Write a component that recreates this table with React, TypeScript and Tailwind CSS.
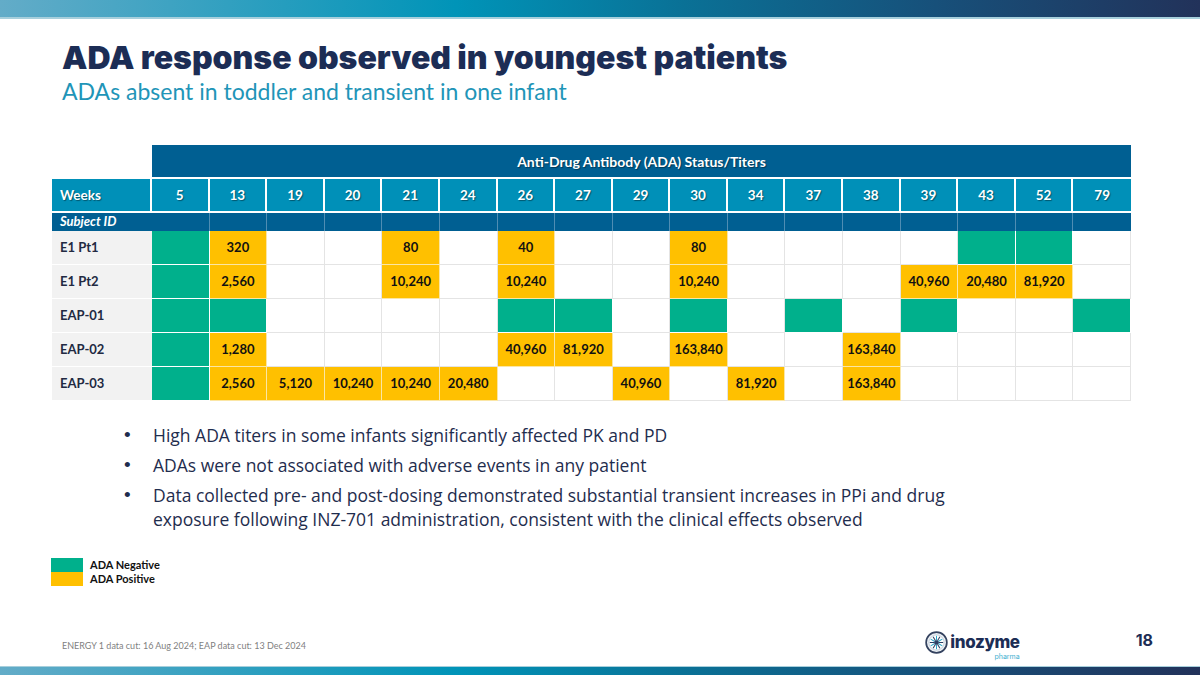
import React from 'react';

const weeks = [5, 13, 19, 20, 21, 24, 26, 27, 29, 30, 34, 37, 38, 39, 43, 52, 79];

// "g" = ADA negative (green), "" = no sample, anything else = positive titer
const subjects: { id: string; cells: string[] }[] = [
  { id: 'E1 Pt1', cells: ['g', '320', '', '', '80', '', '40', '', '', '80', '', '', '', '', 'g', 'g', ''] },
  { id: 'E1 Pt2', cells: ['g', '2,560', '', '', '10,240', '', '10,240', '', '', '10,240', '', '', '', '40,960', '20,480', '81,920', ''] },
  { id: 'EAP-01', cells: ['g', 'g', '', '', '', '', 'g', 'g', '', 'g', '', 'g', '', 'g', '', '', 'g'] },
  { id: 'EAP-02', cells: ['g', '1,280', '', '', '', '', '40,960', '81,920', '', '163,840', '', '', '163,840', '', '', '', ''] },
  { id: 'EAP-03', cells: ['g', '2,560', '5,120', '10,240', '10,240', '20,480', '', '', '40,960', '', '81,920', '', '163,840', '', '', '', ''] },
];

const bullets = [
  'High ADA titers in some infants significantly affected PK and PD',
  'ADAs were not associated with adverse events in any patient',
];

const Cell: React.FC<{ v: string }> = ({ v }) => {
  if (v === 'g') return <div className="h-[34px] bg-[#00b08c] border-r border-b border-white" />;
  if (v === '') return <div className="h-[34px] bg-white border-r border-b border-[#e4e4e4]" />;
  return (
    <div className="h-[34px] bg-[#ffc000] border-r border-b border-[#fbe6a4] flex items-center justify-center text-[13px] font-bold text-[#111]">
      {v}
    </div>
  );
};

const Logo: React.FC = () => (
  <div className="flex items-center gap-[2px]">
    <svg width="23" height="23" viewBox="0 0 24 24">
      <circle cx="12" cy="12" r="10.8" fill="#eef2f6" stroke="#34425f" strokeWidth="1.8" />
      <circle cx="12" cy="12" r="8" fill="#ffffff" stroke="#9fb3c6" strokeWidth="0.6" />
      {Array.from({ length: 12 }).map((_, i) => {
        const a = (i * Math.PI) / 6;
        return (
          <line
            key={i}
            x1={12 + Math.cos(a) * 2.2}
            y1={12 + Math.sin(a) * 2.2}
            x2={12 + Math.cos(a) * 7}
            y2={12 + Math.sin(a) * 7}
            stroke={i % 2 ? '#2aa6c8' : '#2c3e63'}
            strokeWidth="1.1"
          />
        );
      })}
      <circle cx="12" cy="12" r="2.4" fill="#2c3e63" />
    </svg>
    <div className="flex flex-col items-end mt-[7px]">
      <span className="font-['Inter',sans-serif] font-extrabold text-[17px] tracking-[-0.4px] text-[#1c2d55] leading-[21px]">inozyme</span>
      <span className="font-['Inter',sans-serif] text-[7px] text-[#3fb0d0] leading-[7px]">pharma</span>
    </div>
  </div>
);

const App: React.FC = () => (
  <div className="w-[1200px] h-[675px] bg-white flex flex-col overflow-hidden font-['Lato',sans-serif]">
    <div className="h-[17px] bg-[linear-gradient(90deg,#63acc8_0%,#0094b8_38%,#0a7196_57%,#17507a_78%,#22325a_100%)]" />
    <div className="h-[2px] bg-[#a7cfdc]" />

    <div className="pl-[62px] pt-[20px]">
      <h1 className="font-['Inter',sans-serif] font-black text-[32px] leading-[38px] text-[#1c2d55]">
        ADA response observed in youngest patients
      </h1>
      <p className="text-[23px] leading-[28px] text-[#1f95b8]">
        ADAs absent in toddler and transient in one infant
      </p>
    </div>

    <div className="pl-[52px] mt-[40px]">
      <div className="w-[1079px] grid grid-cols-[100px_repeat(17,minmax(0,1fr))]">
        <div className="h-[34px]" />
        <div className="col-span-17 h-[34px] bg-[#005f92] border-b-2 border-white flex items-center justify-center text-[14px] font-bold text-white [text-shadow:1px_1px_1px_rgba(0,0,0,0.4)]">
          Anti-Drug Antibody (ADA) Status/Titers
        </div>

        <div className="h-[34px] bg-[#0090b8] border-r-2 border-b-2 border-white flex items-center pl-[8px] text-[13.5px] font-bold text-white [text-shadow:1px_1px_1px_rgba(0,0,0,0.4)]">
          Weeks
        </div>
        {weeks.map((w, i) => (
          <div
            key={w}
            className={
              'h-[34px] bg-[#0090b8] border-b-2 border-white flex items-center justify-center text-[13.5px] font-bold text-white [text-shadow:1px_1px_1px_rgba(0,0,0,0.4)] ' +
              (i < weeks.length - 1 ? 'border-r-2' : '')
            }
          >
            {w}
          </div>
        ))}

        <div className="col-span-2 h-[18px] bg-[#005f92] border-r border-[#4f8db3] flex items-center pl-[8px] text-[13px] font-bold italic text-white">
          Subject ID
        </div>
        {weeks.slice(1).map((w, i) => (
          <div key={w} className={'h-[18px] bg-[#005f92] ' + (i < weeks.length - 2 ? 'border-r border-[#4f8db3]' : '')} />
        ))}

        {subjects.map((s) => (
          <React.Fragment key={s.id}>
            <div className="h-[34px] bg-[#f2f2f2] border-b border-white flex items-center pl-[8px] text-[13px] font-bold text-[#222a42]">
              {s.id}
            </div>
            {s.cells.map((v, i) => (
              <Cell key={i} v={v} />
            ))}
          </React.Fragment>
        ))}
      </div>
    </div>

    <ul className="mt-[22px] pl-[124px] flex flex-col gap-[6px] font-['Open_Sans',sans-serif] text-[17.5px] leading-[24px] text-[#1f2d4e]">
      {bullets.map((b) => (
        <li key={b} className="flex">
          <span className="w-[29px] shrink-0 font-['Liberation_Sans',sans-serif] text-[19px]">•</span>
          <span>{b}</span>
        </li>
      ))}
      <li className="flex">
        <span className="w-[29px] shrink-0 font-['Liberation_Sans',sans-serif] text-[19px]">•</span>
        <span className="whitespace-nowrap">
          Data collected pre- and post-dosing demonstrated substantial transient increases in PPi and drug
          <br />
          exposure following INZ-701 administration, consistent with the clinical effects observed
        </span>
      </li>
    </ul>

    <div className="mt-[27px] pl-[51px] flex flex-col">
      <div className="flex items-center h-[14px]">
        <div className="w-[32px] h-[14px] bg-[#00b08c]" />
        <span className="ml-[7px] text-[11px] font-bold text-[#111]">ADA Negative</span>
      </div>
      <div className="flex items-center h-[14px]">
        <div className="w-[32px] h-[14px] bg-[#ffc000]" />
        <span className="ml-[7px] text-[11px] font-bold text-[#111]">ADA Positive</span>
      </div>
    </div>

    <div className="flex-1" />

    <div className="h-[47px] flex items-start pr-[47px]">
      <span className="pl-[62px] mt-[21px] text-[9px] leading-[12px] text-[#7f7f7f]">
        ENERGY 1 data cut: 16 Aug 2024; EAP data cut: 13 Dec 2024
      </span>
      <div className="ml-auto mt-[6px]">
        <Logo />
      </div>
      <span className="ml-[116px] mt-[12px] font-['Inter',sans-serif] font-bold text-[16px] leading-[18px] text-[#1c2d55]">18</span>
    </div>

    <div className="h-[1px] bg-[#a7cfdc]" />
    <div className="h-[8px] bg-[linear-gradient(90deg,#63acc8_0%,#0094b8_38%,#0a7196_57%,#17507a_78%,#22325a_100%)]" />
  </div>
);

export default App;
